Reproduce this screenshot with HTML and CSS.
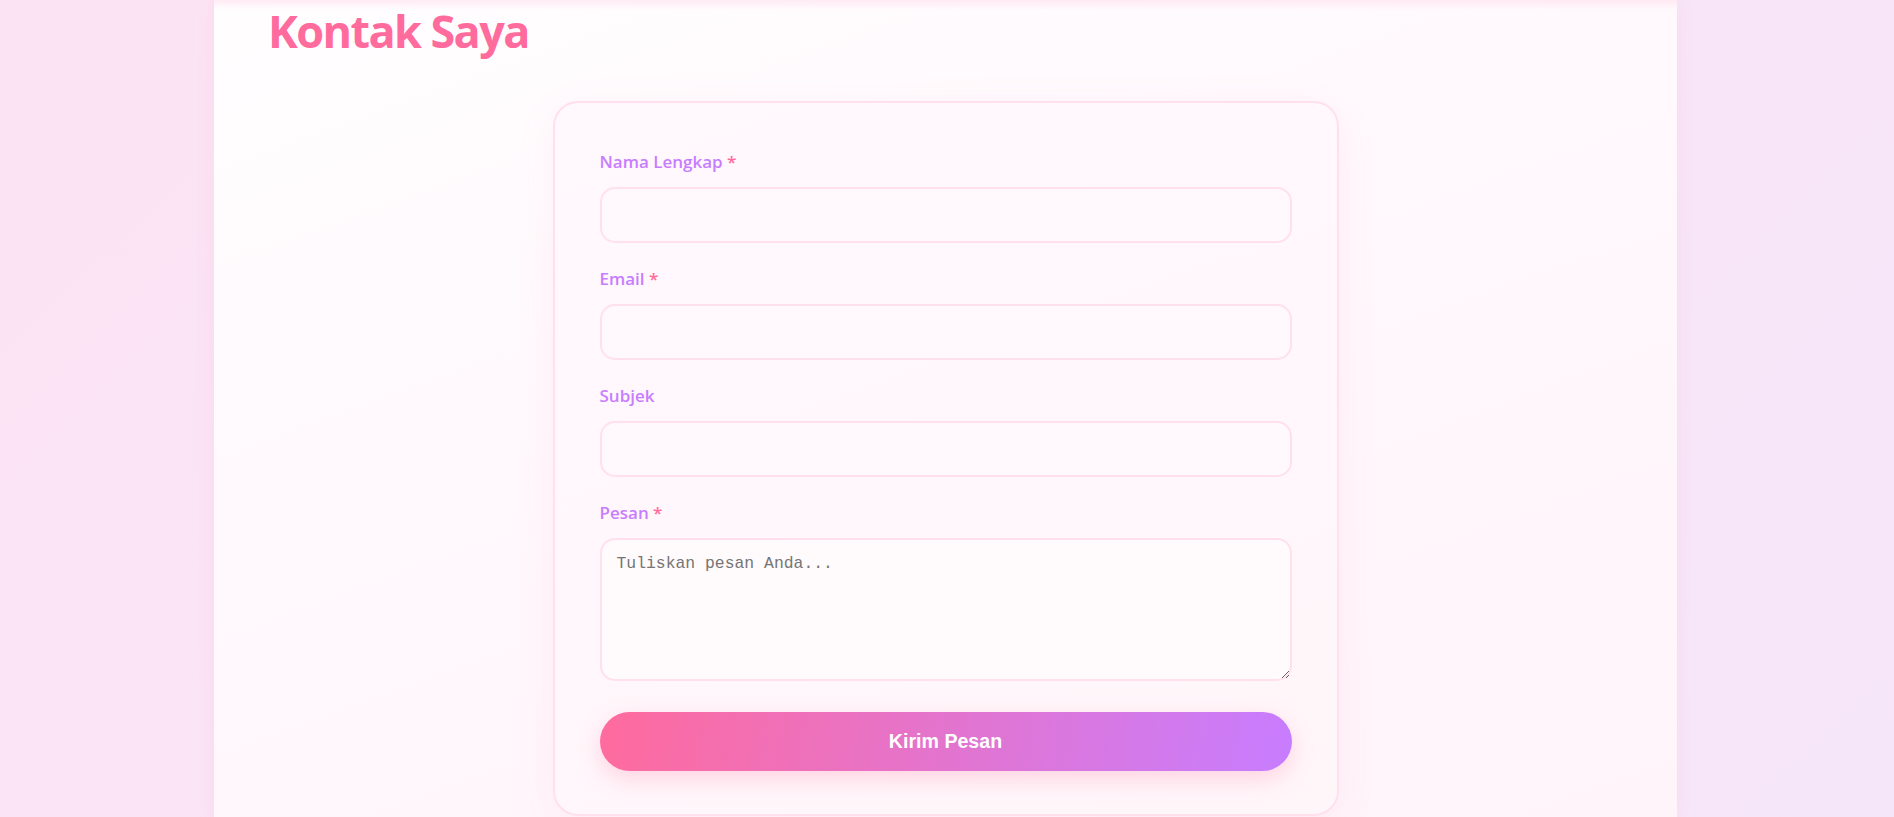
FILE: index.html
```html
<!DOCTYPE html>
<html lang="id">
<head>
<meta charset="utf-8">
<title>Kontak Saya</title>
<link rel="stylesheet" href="styles.css">
</head>
<body>
<div class="page">
  <section class="container">
    <h2 class="section-title">Kontak Saya</h2>
    <form class="contact-card">
      <div class="form-group">
        <label class="form-label">Nama Lengkap <span class="req">*</span></label>
        <input class="form-input" type="text">
      </div>
      <div class="form-group">
        <label class="form-label">Email <span class="req">*</span></label>
        <input class="form-input" type="email">
      </div>
      <div class="form-group">
        <label class="form-label">Subjek</label>
        <input class="form-input" type="text">
      </div>
      <div class="form-group">
        <label class="form-label">Pesan <span class="req">*</span></label>
        <textarea class="form-textarea" placeholder="Tuliskan pesan Anda..."></textarea>
      </div>
      <button class="submit-btn" type="button">Kirim Pesan</button>
    </form>
  </section>
</div>
</body>
</html>
```
FILE: styles.css
```css
* { box-sizing: border-box; }

html, body {
  margin: 0;
  padding: 0;
  height: 100%;
  overflow: hidden;
}

body {
  font-family: "Open Sans", "Noto Sans", sans-serif;
  background: linear-gradient(135deg, #fce3f3 0%, #f8e5f7 60%, #f6e6fa 100%);
}

.page {
  min-height: 100vh;
}

.container {
  width: 1463px;
  margin: 0 0 0 214px;
  min-height: 100vh;
  padding: 4px 54px 0;
  background:
    linear-gradient(180deg, rgba(255, 220, 236, 0.55) 0px, rgba(255, 240, 248, 0) 10px),
    linear-gradient(160deg, #fffeff 0%, #fff8fc 45%, #fff4fa 100%);
  box-shadow: 0 0 18px rgba(255, 107, 157, 0.08);
}

.section-title {
  margin: 0 0 43px;
  font-size: 45px;
  line-height: 1.2;
  font-weight: 700;
  color: #ff6b9d;
  letter-spacing: -1.6px;
}

.contact-card {
  width: 786px;
  margin: 0 auto;
  padding: 47px 45px 43px;
  background: linear-gradient(160deg, #fff8fc 0%, #fff6fa 100%);
  border: 2px solid #ffe0ec;
  border-radius: 25px;
  box-shadow: 0 10px 40px rgba(255, 107, 157, 0.08);
}

.form-group {
  margin-bottom: 24px;
}

.form-label {
  display: block;
  margin-bottom: 13px;
  font-size: 17px;
  line-height: 24px;
  font-weight: 600;
  color: #c77dff;
}

.req {
  color: #ff6b9d;
}

.form-input,
.form-textarea {
  display: block;
  width: 100%;
  border: 2px solid #ffe0ec;
  border-radius: 15px;
  background: #fff8fc;
  outline: none;
}

.form-input {
  height: 56px;
  padding: 15px;
  font-size: 16px;
}

.form-textarea {
  height: 143px;
  padding: 13px 15px;
  background: #fffafc;
  font-family: "Liberation Mono", monospace;
  font-size: 16.4px;
  line-height: 22px;
  resize: vertical;
}

.form-textarea::placeholder {
  color: #757575;
}

.submit-btn {
  display: block;
  width: 100%;
  height: 59px;
  margin-top: 31px;
  border: none;
  border-radius: 30px;
  background: linear-gradient(100deg, #ff6b9d 0%, #c77dff 100%);
  color: #ffffff;
  font-family: "Liberation Sans", Arial, sans-serif;
  font-size: 19.6px;
  font-weight: 700;
  box-shadow: 0 8px 22px rgba(255, 107, 157, 0.25);
  cursor: pointer;
}
```
